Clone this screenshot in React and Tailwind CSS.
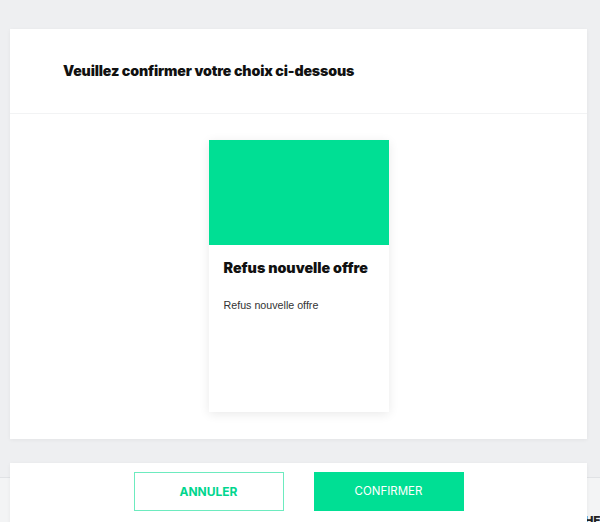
export default function App() {
  return (
    <div className="relative h-[522px] w-[600px] overflow-hidden bg-[#eeeff1]" style={{ fontFamily: "Inter, 'Liberation Sans', sans-serif" }}>
      {/* background page behind the modal */}
      <div className="absolute left-0 right-0 top-[477px] h-[45px] border-t border-[#e0e2e5] bg-[#f3f4f5]">
        <span className="absolute left-[576px] top-[34px] text-[12px] font-extrabold tracking-tight text-[#222]">CHE</span>
      </div>

      <div className="relative flex flex-col pl-[10px] pr-[13px] pt-[29px]">
        <div className="flex h-[410px] flex-col bg-white shadow-[0_1px_4px_rgba(0,0,0,0.05)]">
          <div className="flex h-[85px] items-center border-b border-[#f2f3f4] pl-[53px]">
            <h1 className="text-[14.2px] font-black tracking-[-0.15px] text-[#111]">Veuillez confirmer votre choix ci-dessous</h1>
          </div>
          <div className="flex justify-center pt-[26px]">
            <div className="flex h-[272px] w-[180px] flex-col bg-white shadow-[0_2px_10px_rgba(0,0,0,0.09)]">
              <div className="h-[105px] bg-[#00df94]" />
              <div className="px-[15px] pt-[12px]">
                <h2 className="text-[14.3px] font-black text-[#111]">Refus nouvelle offre</h2>
                <p className="mt-[19px] text-[10.7px] text-[#333]" style={{ fontFamily: "'Liberation Sans', Arial, sans-serif" }}>Refus nouvelle offre</p>
              </div>
            </div>
          </div>
        </div>

        <div className="mt-[24px] flex h-[70px] justify-center gap-[30px] bg-white pt-[9px] shadow-[0_1px_4px_rgba(0,0,0,0.05)]">
          <button className="flex h-[39px] w-[150px] items-center justify-center border border-[#6debbf] bg-white text-[12px] font-bold text-[#00d68e]">ANNULER</button>
          <button className="flex h-[39px] w-[150px] items-center justify-center bg-[#00df94] text-[11.5px] font-normal text-white">CONFIRMER</button>
        </div>
      </div>
    </div>
  );
}
